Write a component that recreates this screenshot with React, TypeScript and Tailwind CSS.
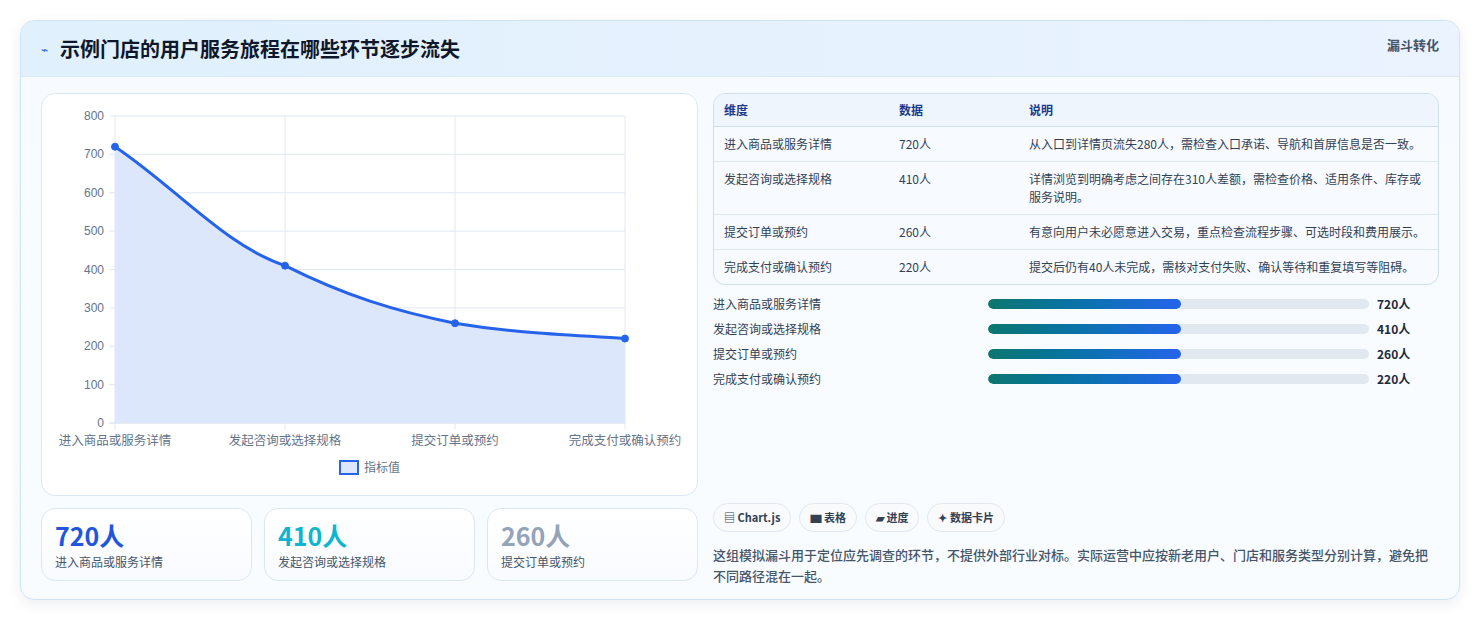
import React from "react";

const rows = [
  ["进入商品或服务详情", "720人", "从入口到详情页流失280人，需检查入口承诺、导航和首屏信息是否一致。"],
  ["发起咨询或选择规格", "410人", "详情浏览到明确考虑之间存在310人差额，需检查价格、适用条件、库存或服务说明。"],
  ["提交订单或预约", "260人", "有意向用户未必愿意进入交易，重点检查流程步骤、可选时段和费用展示。"],
  ["完成支付或确认预约", "220人", "提交后仍有40人未完成，需核对支付失败、确认等待和重复填写等阻碍。"],
];

function Chart() {
  const X = [113, 283, 453, 623];
  const v = [720, 410, 260, 220];
  const y = (n: number) => 422 - n * 0.38375;
  const P = v.map((n) => y(n));
  const line = `M${X[0]},${P[0]} C${X[0] + 60},${P[0] + 40} ${X[1] - 60},${P[1] - 20} ${X[1]},${P[1]} C${X[1] + 60},${P[1] + 30} ${X[2] - 60},${P[2] - 12} ${X[2]},${P[2]} C${X[2] + 60},${P[2] + 10} ${X[3] - 60},${P[3] - 4} ${X[3]},${P[3]}`;
  const ticks = [0, 100, 200, 300, 400, 500, 600, 700, 800];
  return (
    <svg width="657" height="403" viewBox="40 93 657 403" className="block">
      {ticks.map((t) => (
        <g key={t}>
          <line x1={107} x2={623} y1={y(t)} y2={y(t)} stroke={t === 0 ? "#cbd5e1" : "#e2e8f0"} />
          <text x={102} y={y(t) + 4} textAnchor="end" fontSize="12" fill="#64748b" fontFamily="Liberation Sans, sans-serif">{t}</text>
        </g>
      ))}
      {X.map((x) => (
        <line key={x} x1={x} x2={x} y1={115} y2={428} stroke="#e2e8f0" />
      ))}
      <path d={`${line} L623,422 L113,422 Z`} fill="#dde7fb" />
      <path d={line} fill="none" stroke="#2563eb" strokeWidth="3" />
      {X.map((x, i) => (
        <circle key={x} cx={x} cy={P[i]} r="3.5" fill="#2563eb" stroke="#2563eb" />
      ))}
      {rows.map((r, i) => (
        <text key={i} x={X[i]} y={444} textAnchor="middle" fontSize="12.5" fill="#64748b" fontFamily="Noto Sans CJK SC, sans-serif">{r[0]}</text>
      ))}
      <rect x={338} y={460} width={18} height={13} fill="#dde7fb" stroke="#2563eb" strokeWidth="2" />
      <text x={362} y={471} fontSize="12" fill="#64748b" fontFamily="Noto Sans CJK SC, sans-serif">指标值</text>
    </svg>
  );
}

export default function App() {
  return (
    <div className="w-[1480px] h-[620px] bg-white p-5" style={{ fontFamily: '"Noto Sans CJK SC", "Noto Sans", sans-serif' }}>
      <div className="h-[580px] rounded-[14px] border border-[#cfe3f3] overflow-hidden bg-gradient-to-b from-[#f7fbff] to-[#f8fcff] shadow-[0_4px_14px_rgba(15,40,80,0.08)]">
        <div className="h-[56px] bg-gradient-to-r from-[#e0f0fd] to-[#eaf3ff] border-b border-[#d8e9f7] flex items-center px-5 justify-between">
          <div className="flex items-center gap-3">
            <span className="text-[#2563eb] text-xs">⌁</span>
            <span className="text-[20px] font-bold text-[#0f172a]">示例门店的用户服务旅程在哪些环节逐步流失</span>
          </div>
          <span className="self-start mt-3.5 text-[13px] font-bold text-[#475569]">漏斗转化</span>
        </div>
        <div className="flex gap-[15px] px-5 pt-4">
          <div className="w-[657px] flex flex-col gap-3">
            <div className="h-[403px] bg-white rounded-[14px] border border-[#dbe7f3] overflow-hidden">
              <Chart />
            </div>
            <div className="grid grid-cols-3 gap-3">
              {[["720人", "text-[#2156dc]", rows[0][0]], ["410人", "text-[#0fb5cf]", rows[1][0]], ["260人", "text-[#94a3b8]", rows[2][0]]].map(([a, c, b]) => (
                <div key={a} className="h-[73px] rounded-[14px] border border-[#dbe7f3] bg-gradient-to-b from-white to-[#f8fbff] px-[13px] pt-[8px]">
                  <div className={`text-[25px] font-bold leading-[36px] ${c}`}>{a}</div>
                  <div className="text-[12px] text-[#475569] leading-[18px]">{b}</div>
                </div>
              ))}
            </div>
          </div>
          <div className="w-[728px] flex flex-col">
            <div className="rounded-[12px] border border-[#cfdeec] overflow-hidden bg-[#f7fbff]">
              <div className="flex h-[33px] items-center bg-[#eef5fd] border-b border-[#cfdeec] text-[12px] font-bold text-[#1e3a8a]">
                <div className="w-[185px] pl-[10px]">维度</div><div className="w-[130px]">数据</div><div>说明</div>
              </div>
              {rows.map((r, i) => (
                <div key={i} className={`flex items-start py-[8px] text-[12px] text-[#334155] leading-[18px] ${i < 3 ? "border-b border-[#dfe8f1]" : ""}`}>
                  <div className="w-[185px] pl-[10px] shrink-0">{r[0]}</div>
                  <div className="w-[130px] shrink-0">{r[1]}</div>
                  <div className="w-[400px]">{r[2]}</div>
                </div>
              ))}
            </div>
            <div className="flex flex-col gap-[7px] mt-[10px]">
              {rows.map((r, i) => (
                <div key={i} className="flex items-center h-[18px] text-[12px]">
                  <div className="w-[275px] text-[#334155]">{r[0]}</div>
                  <div className="w-[381px] h-[10px] rounded-full bg-[#e2e8f0] overflow-hidden">
                    <div className="h-full w-[193px] rounded-full bg-gradient-to-r from-[#0f766e] to-[#2563eb]" />
                  </div>
                  <div className="ml-2 font-bold text-[#1e293b]">{r[1]}</div>
                </div>
              ))}
            </div>
            <div className="flex gap-2 mt-[115px]">
              {["▤ Chart.js", "▆ 表格", "▰ 进度", "✦ 数据卡片"].map((t) => (
                <span key={t} className="h-[29px] px-[10px] flex items-center rounded-full border border-[#e2e8f0] bg-[#f8fafc] text-[11px] font-bold text-[#334155]">{t}</span>
              ))}
            </div>
            <p className="mt-[12px] text-[13px] leading-[21px] text-[#475569] font-medium">这组模拟漏斗用于定位应先调查的环节，不提供外部行业对标。实际运营中应按新老用户、门店和服务类型分别计算，避免把不同路径混在一起。</p>
          </div>
        </div>
      </div>
    </div>
  );
}
